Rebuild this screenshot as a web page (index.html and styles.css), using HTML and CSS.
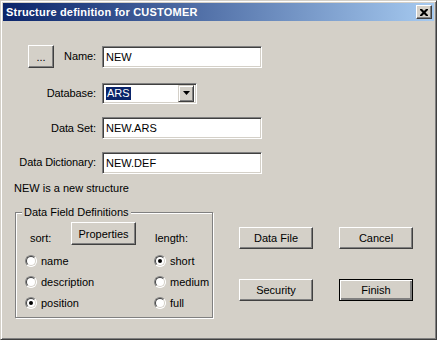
FILE: index.html
```html
<!DOCTYPE html>
<html lang="en">
<head>
  <meta charset="UTF-8">
  <title>Structure definition for CUSTOMER</title>
  <link rel="stylesheet" href="styles.css">
</head>
<body>

<div class="window">
  <div class="titlebar">
    <span class="title">Structure definition for CUSTOMER</span>
    <button class="close-btn" aria-label="Close">
      <svg width="8" height="7" viewBox="0 0 8 7"><path d="M0 0h2l2 2 2-2h2v1l-2.5 2.5 2.5 2.5v1h-2l-2-2-2 2h-2v-1l2.5-2.5-2.5-2.5z" fill="#000"/></svg>
    </button>
  </div>

  <div class="content">
    <div class="form">
      <div class="label first">
        <button class="btn dots">...</button>
        <span>Name:</span>
      </div>
      <div class="field text wide">NEW</div>

      <div class="label">Database:</div>
      <div class="field combo">
        <span class="sel">ARS</span>
        <span class="drop">
          <svg width="7" height="4" viewBox="0 0 7 4"><path d="M0 0h7l-3.5 4z" fill="#000"/></svg>
        </span>
      </div>

      <div class="label">Data Set:</div>
      <div class="field text wide">NEW.ARS</div>

      <div class="label">Data Dictionary:</div>
      <div class="field text wide">NEW.DEF</div>
    </div>

    <p class="status">NEW is a new structure</p>

    <div class="lower">
      <fieldset class="group">
        <legend>Data Field Definitions</legend>
        <div class="options">
          <div class="head">
            <span class="head-label">sort:</span>
            <button class="btn props">Properties</button>
          </div>
          <div class="head"><span class="length-label">length:</span></div>

          <div class="opt"><span class="radio"></span>name</div>
          <div class="opt"><span class="radio checked"></span>short</div>
          <div class="opt"><span class="radio"></span>description</div>
          <div class="opt"><span class="radio"></span>medium</div>
          <div class="opt"><span class="radio checked"></span>position</div>
          <div class="opt"><span class="radio"></span>full</div>
        </div>
      </fieldset>

      <div class="actions">
        <button class="btn action">Data File</button>
        <button class="btn action">Cancel</button>
        <button class="btn action">Security</button>
        <button class="btn action default">Finish</button>
      </div>
    </div>
  </div>
</div>

</body>
</html>
```

FILE: styles.css
```css
* {
  box-sizing: border-box;
}
body {
  margin: 0;
  font-family: "Liberation Sans", Arial, sans-serif;
  font-size: 11px;
  color: #000;
  background: #d4d0c8;
}
.window {
  width: 437px;
  height: 340px;
  padding: 2px;
  background: #d4d0c8;
  border: 1px solid;
  border-color: #d4d0c8 #404040 #404040 #d4d0c8;
  box-shadow: inset 1px 1px #fff, inset -1px -1px #808080;
  display: flex;
  flex-direction: column;
}

/* title bar */
.titlebar {
  height: 18px;
  display: flex;
  align-items: center;
  justify-content: space-between;
  padding: 0 2px 0 3px;
  background: linear-gradient(to right, #0a246a, #a6caf0);
}
.title {
  color: #fff;
  font-weight: bold;
  font-size: 11px;
  letter-spacing: 0.2px;
}
.close-btn {
  width: 16px;
  height: 14px;
  padding: 0;
  display: flex;
  align-items: center;
  justify-content: center;
  background: #d4d0c8;
  border: 1px solid;
  border-color: #fff #404040 #404040 #fff;
  box-shadow: inset -1px -1px #808080;
}

.content {
  padding-top: 17px;
}

/* buttons */
.btn {
  font-family: inherit;
  font-size: 11px;
  color: #000;
  background: #d4d0c8;
  padding: 0;
  border: 1px solid;
  border-color: #fff #404040 #404040 #fff;
  box-shadow: inset -1px -1px #808080;
}
.btn.default {
  border-color: #000;
  box-shadow: inset 1px 1px #fff, inset -2px -2px #808080;
}

/* top form */
.form {
  display: grid;
  grid-template-columns: 93px 200px;
  grid-template-rows: 37px 36px 34px 35px;
  column-gap: 6px;
  align-items: center;
}
.label {
  justify-self: end;
  line-height: 13px;
  letter-spacing: -0.1px;
}
.label.first {
  display: flex;
  align-items: center;
  gap: 10px;
}
.dots {
  width: 26px;
  height: 23px;
  line-height: 10px;
}
.field {
  background: #fff;
  border: 1px solid;
  border-color: #808080 #fff #fff #808080;
  box-shadow: inset 1px 1px #404040, inset -1px -1px #d4d0c8;
}
.field.text {
  height: 22px;
  padding: 0 3px;
  line-height: 20px;
}
.field.wide {
  width: 160px;
}
.field.combo {
  width: 95px;
  height: 21px;
  padding: 2px;
  display: flex;
  align-items: center;
  justify-content: space-between;
}
.sel {
  background: #0a246a;
  color: #fff;
  line-height: 13px;
  padding: 0 1px;
  margin-left: 1px;
}
.drop {
  width: 16px;
  height: 17px;
  display: flex;
  align-items: center;
  justify-content: center;
  background: #d4d0c8;
  border: 1px solid;
  border-color: #d4d0c8 #404040 #404040 #d4d0c8;
  box-shadow: inset 1px 1px #fff, inset -1px -1px #808080;
}

.status {
  margin: 2px 0 0 11px;
  line-height: 13px;
}

/* lower area */
.lower {
  display: flex;
  align-items: flex-start;
  margin: 11px 0 0 12px;
}
.group {
  width: 198px;
  margin: 0;
  padding: 0 0 4px 6px;
  border: 1px solid #808080;
  box-shadow: inset 1px 1px #fff, 1px 1px #fff;
}
.group legend {
  padding: 0 2px;
  line-height: 13px;
  background: #d4d0c8;
}
.options {
  display: grid;
  grid-template-columns: 129px auto;
  grid-template-rows: 28px 21px 21px 21px;
  margin: 3px 0 0 3px;
}
.head {
  display: flex;
  align-items: flex-end;
  height: 23px;
  line-height: 13px;
}
.head-label {
  width: 46px;
  padding-left: 5px;
}
.length-label {
  padding-left: 1px;
}
.props {
  width: 65px;
  height: 23px;
}
.opt {
  display: flex;
  align-items: center;
  gap: 4px;
}
.radio {
  position: relative;
  width: 12px;
  height: 12px;
  border-radius: 50%;
  background: #fff;
  border: 1px solid;
  border-color: #808080 #fff #fff #808080;
}
.radio::before {
  content: "";
  position: absolute;
  inset: 0;
  border-radius: 50%;
  border: 1px solid;
  border-color: #404040 #d4d0c8 #d4d0c8 #404040;
}
.radio.checked::after {
  content: "";
  position: absolute;
  left: 3px;
  top: 3px;
  width: 4px;
  height: 4px;
  border-radius: 50%;
  background: #000;
}

.actions {
  display: grid;
  grid-template-columns: 74px 74px;
  grid-auto-rows: 22px;
  column-gap: 26px;
  row-gap: 30px;
  margin: 21px 0 0 26px;
}
.action {
  height: 22px;
}
```
